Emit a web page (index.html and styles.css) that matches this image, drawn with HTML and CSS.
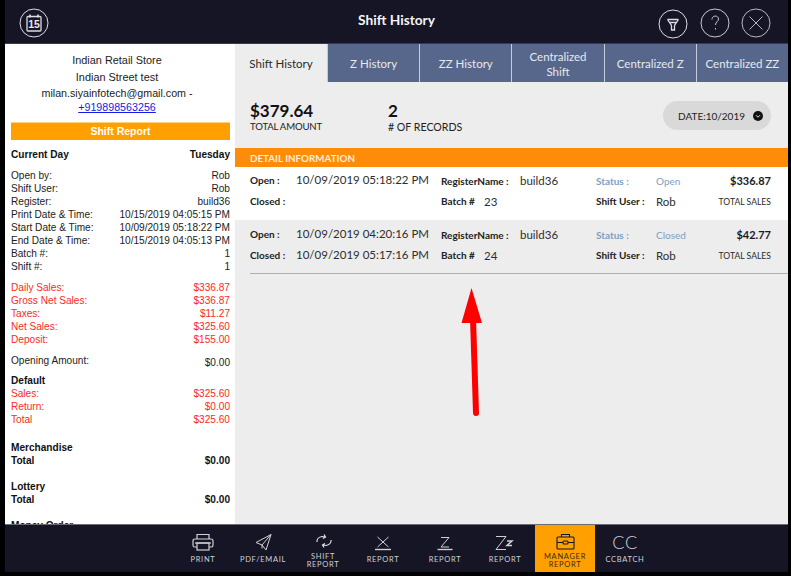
FILE: index.html
```html
<!DOCTYPE html>
<html lang="en">
<head>
<meta charset="utf-8">
<title>Shift History</title>
<link rel="stylesheet" href="styles.css">
</head>
<body>
<div class="app">
  <header class="topbar">
    <svg class="cal" width="30" height="30" viewBox="0 0 30 30" fill="none" stroke="#dcdce2">
      <circle cx="15" cy="15" r="14"/>
      <rect x="8" y="8.5" width="14" height="14.5" rx="1" stroke-width="1.3"/>
      <path d="M11 6.500v3M19 6.500v3" stroke-width="1.6"/>
      <text x="15" y="20" text-anchor="middle" class="cal-num">15</text>
    </svg>
    <h1 class="title">Shift History</h1>
    <div class="top-actions">
      <svg class="drop" width="30" height="30" viewBox="0 0 30 30" fill="none" stroke="#dcdce2">
        <circle cx="15" cy="15" r="14"/>
        <path d="M9.500 10.500h11M9.500 10.500l4 6v4.500h3v-4.500l4-6M11.500 13.500h7" stroke-width="1.3"/>
      </svg>
      <svg width="30" height="30" viewBox="0 0 30 30" fill="none" stroke="#c8c8d0">
        <circle cx="15" cy="15" r="14"/>
        <path d="M12 11.500c0-4.500 6.500-4.500 6.500-.5 0 2.500-3 2.800-3 6M15.500 20v1.500"/>
      </svg>
      <svg width="30" height="30" viewBox="0 0 30 30" fill="none" stroke="#c8c8d0" stroke-width="0.9">
        <circle cx="15" cy="15" r="14"/>
        <path d="M8.500 8.500l13 13M21.500 8.500l-13 13"/>
      </svg>
    </div>
  </header>

  <div class="main">
    <aside class="receipt">
      <p class="store">Indian Retail Store</p>
      <p class="store">Indian Street test</p>
      <p class="contact">milan.siyainfotech@gmail.com - <a href="#">+919898563256</a></p>
      <div class="receipt-title">Shift Report</div>

      <div class="line strong day"><span>Current Day</span><span>Tuesday</span></div>

      <div class="block">
        <div class="line"><span>Open by:</span><span>Rob</span></div>
        <div class="line"><span>Shift User:</span><span>Rob</span></div>
        <div class="line"><span>Register:</span><span>build36</span></div>
        <div class="line"><span>Print Date &amp; Time:</span><span>10/15/2019 04:05:15 PM</span></div>
        <div class="line"><span>Start Date &amp; Time:</span><span>10/09/2019 05:18:22 PM</span></div>
        <div class="line"><span>End Date &amp; Time:</span><span>10/15/2019 04:05:13 PM</span></div>
        <div class="line"><span>Batch #:</span><span>1</span></div>
        <div class="line"><span>Shift #:</span><span>1</span></div>
      </div>

      <div class="block red">
        <div class="line"><span>Daily Sales:</span><span>$336.87</span></div>
        <div class="line"><span>Gross Net Sales:</span><span>$336.87</span></div>
        <div class="line"><span>Taxes:</span><span>$11.27</span></div>
        <div class="line"><span>Net Sales:</span><span>$325.60</span></div>
        <div class="line"><span>Deposit:</span><span>$155.00</span></div>
      </div>

      <div class="block tight">
        <div class="line"><span>Opening Amount:</span><span class="nudge">$0.00</span></div>
      </div>

      <div class="block">
        <div class="line strong"><span>Default</span></div>
        <div class="red">
          <div class="line"><span>Sales:</span><span>$325.60</span></div>
          <div class="line"><span>Return:</span><span>$0.00</span></div>
          <div class="line"><span>Total</span><span>$325.60</span></div>
        </div>
      </div>

      <div class="block wide first">
        <div class="line strong"><span>Merchandise</span></div>
        <div class="line strong"><span>Total</span><span>$0.00</span></div>
      </div>

      <div class="block wide">
        <div class="line strong"><span>Lottery</span></div>
        <div class="line strong"><span>Total</span><span>$0.00</span></div>
      </div>

      <div class="block wide">
        <div class="line strong"><span>Money Order</span></div>
      </div>
    </aside>

    <section class="content">
      <nav class="tabs">
        <div class="tab active">Shift History</div>
        <div class="tab">Z History</div>
        <div class="tab">ZZ History</div>
        <div class="tab">Centralized<br>Shift</div>
        <div class="tab">Centralized Z</div>
        <div class="tab">Centralized ZZ</div>
      </nav>

      <div class="summary">
        <div class="stat">
          <div class="stat-value">$379.64</div>
          <div class="stat-label tight-label">TOTAL AMOUNT</div>
        </div>
        <div class="stat">
          <div class="stat-value">2</div>
          <div class="stat-label"># OF RECORDS</div>
        </div>
        <div class="date-pill">DATE:10/2019
          <svg width="10" height="10" viewBox="0 0 10 10"><circle cx="5" cy="5" r="5" fill="#111"/><path d="M3 4.200l2 2 2-2" fill="none" stroke="#ddd"/></svg>
        </div>
      </div>

      <div class="section-bar">DETAIL INFORMATION</div>

      <div class="record white">
        <b class="k">Open :</b><span class="v date">10/09/2019 05:18:22 PM</span>
        <b class="k low">RegisterName :</b><span class="v">build36</span>
        <span class="k low status">Status :</span><span class="v status-v">Open</span>
        <b class="money">$336.87</b>
        <b class="k">Closed :</b><span class="v date"></span>
        <b class="k">Batch #</b><span class="v batch">23</span>
        <b class="k">Shift User :</b><span class="v">Rob</span>
        <span class="sales">TOTAL SALES</span>
      </div>

      <div class="record last">
        <b class="k">Open :</b><span class="v date">10/09/2019 04:20:16 PM</span>
        <b class="k low">RegisterName :</b><span class="v">build36</span>
        <span class="k low status">Status :</span><span class="v status-v">Closed</span>
        <b class="money">$42.77</b>
        <b class="k">Closed :</b><span class="v date">10/09/2019 05:17:16 PM</span>
        <b class="k">Batch #</b><span class="v batch">24</span>
        <b class="k">Shift User :</b><span class="v">Rob</span>
        <span class="sales">TOTAL SALES</span>
      </div>

      <svg class="arrow" width="30" height="136" viewBox="0 0 30 136">
        <path d="M12 30l3 95" stroke="#fe0000" stroke-width="6" stroke-linecap="round"/>
        <path d="M10.500 0L0.500 35H21z" fill="#fe0000"/>
      </svg>
    </section>
  </div>

  <footer class="toolbar">
    <div class="tool">
      <svg width="22" height="20" viewBox="0 0 22 20" fill="none" stroke="#d0d0d6" stroke-width="1.2"><path d="M5 6V1.500h12V6M5 14H2.500Q1 14 1 12V8q0-2 2-2h16q2 0 2 2v4q0 2-1.500 2H17"/><rect x="5" y="10" width="12" height="7"/><path d="M3 10h16"/></svg>
      <span>PRINT</span>
    </div>
    <div class="tool">
      <svg width="22" height="20" viewBox="0 0 22 20" fill="none" stroke="#d0d0d6" stroke-width="1"><path d="M19 1.500L4 9.500l6 2.500 4 5zM19 1.500L10 12v3.500"/></svg>
      <span>PDF/EMAIL</span>
    </div>
    <div class="tool">
      <svg width="22" height="20" viewBox="0 0 22 20" fill="none" stroke="#e2e2e6" stroke-width="1.2"><path d="M5 9c-.5-3 2-5 5-5.500l3 .5M12 1.500l1.500 2.500-2.500 1.500M19 7c.5 3-2 5-5 5.500l-3-.5M12 14.500L10.500 12 13 10.500"/></svg>
      <span class="two">SHIFT<br>REPORT</span>
    </div>
    <div class="tool">
      <svg width="22" height="20" viewBox="0 0 22 20" fill="none" stroke="#d0d0d6" stroke-width="1"><path d="M5.500 4l11 10M16.500 4l-11 10"/><path d="M3 16.500h16" stroke-width="1.400"/></svg>
      <span>REPORT</span>
    </div>
    <div class="tool z-tool">
      <svg width="22" height="20" viewBox="0 0 22 20" fill="none" stroke="#d0d0d6" stroke-width="1"><path d="M7 4.500h8L7 14h8"/><path d="M3.500 16.500h15" stroke-width="1.400"/></svg>
      <span>REPORT</span>
    </div>
    <div class="tool">
      <svg width="22" height="20" viewBox="0 0 22 20" fill="none" stroke="#d0d0d6" stroke-width="1"><path d="M2 3.500h10L2 16.500h10"/><path d="M13 8h5l-5 4.500h5" stroke-width="1.500"/></svg>
      <span>REPORT</span>
    </div>
    <div class="tool active">
      <svg width="22" height="20" viewBox="0 0 22 20" fill="none" stroke="#17162a" stroke-width="1.100"><rect x="3" y="4" width="17" height="12" rx="1"/><path d="M7.500 4V1.500h8V4M3 9.500h6M14 9.500h6"/><rect x="9" y="8" width="5" height="3" rx="1"/></svg>
      <span class="two">MANAGER<br>REPORT</span>
    </div>
    <div class="tool">
      <div class="cc">CC</div>
      <span>CCBATCH</span>
    </div>
  </footer>
</div>
</body>
</html>
```

FILE: styles.css
```css
* { box-sizing: border-box; }

html, body {
  margin: 0;
  height: 100%;
  overflow: hidden;
  background: #000;
}

.app {
  width: 791px;
  height: 576px;
  padding: 0 3px 4px 5px;
  display: flex;
  flex-direction: column;
  background: #000;
  font-family: "Lato", sans-serif;
}

/* top bar */
.topbar {
  flex: 0 0 44px;
  padding: 8px 17px 0 14px;
  background: #161525;
  border-bottom: 1px solid #3a3a48;
  display: flex;
  align-items: flex-start;
  justify-content: space-between;
  position: relative;
}

.cal-num {
  font-family: "Liberation Sans", sans-serif;
  font-size: 10.500px;
  font-weight: 700;
  fill: #e8e8ec;
  stroke: none;
}

.title {
  position: absolute;
  left: 0;
  right: 0;
  top: 11px;
  margin: 0;
  text-align: center;
  font-size: 13.700px;
  line-height: 17px;
  font-weight: 700;
  color: #f4f4f6;
}

.top-actions {
  display: flex;
  gap: 11.500px;
}

.top-actions svg { display: block; }
.top-actions .drop { margin-top: 1px; }

/* layout */
.main {
  flex: 0 0 480px;
  display: flex;
  min-height: 0;
}

/* left receipt */
.receipt {
  flex: 0 0 230px;
  height: 480px;
  overflow: hidden;
  padding: 10px 5px 0 6px;
  background: #fff;
  font-family: "Liberation Sans", sans-serif;
  font-size: 10.100px;
  line-height: 13px;
  color: #1c1c1c;
}

.store {
  margin: 0 7px 3.500px 0;
  text-align: center;
  font-size: 10.900px;
  line-height: 13px;
}

.contact {
  margin: -1px 7px 0 0;
  text-align: center;
  font-size: 10.700px;
  line-height: 14px;
}

.contact a { color: #1a1ae6; }

.receipt-title {
  height: 18px;
  margin-top: 8px;
  border-top: 1px solid #ffd27a;
  background: #ffa000;
  color: #fff;
  font-weight: 700;
  font-size: 10.500px;
  line-height: 17px;
  text-align: center;
}

.line {
  display: flex;
  justify-content: space-between;
  height: 13px;
}

.strong { font-weight: 700; color: #111; }
.day { margin-top: 8px; margin-bottom: 8px; }
.block { margin-bottom: 8px; }
.block.tight { margin-bottom: 7px; }
.block.wide { margin: 13px 0 0; }
.block.wide.first { margin-top: 15px; }
.red { color: #fb2a1d; }
.nudge { position: relative; top: 2px; }

/* right content */
.content {
  flex: 1;
  min-width: 0;
  position: relative;
  background: #ededed;
}

.tabs {
  display: flex;
  height: 38px;
  background: #57678c;
}

.tab {
  flex: 1 1 0;
  display: flex;
  align-items: center;
  justify-content: center;
  padding: 1px 2px 0;
  border-left: 1px solid #c5ccd9;
  color: #e7e9ef;
  font-size: 11.500px;
  line-height: 15px;
  text-align: center;
}

.tab.active {
  flex: 0 0 92px;
  border-left: 0;
  background: #ededed;
  color: #2a2a2a;
}

.summary {
  height: 66px;
  padding: 19px 17px 0 15px;
  display: flex;
  align-items: flex-start;
}

.stat { width: 138px; }

.stat-value {
  font-size: 17px;
  line-height: 20px;
  font-weight: 700;
  color: #111;
}

.stat-label {
  font-size: 10.600px;
  line-height: 12px;
  color: #222;
}

.tight-label {
  font-size: 9.600px;
  word-spacing: -0.300px;
  letter-spacing: -0.150px;
}

.date-pill {
  margin-left: auto;
  width: 108px;
  height: 29px;
  padding: 0 8px 0 15px;
  display: flex;
  align-items: center;
  justify-content: space-between;
  border-radius: 15px;
  background: #d9d9d9;
  font-size: 10px;
  color: #222;
}

.section-bar {
  height: 19px;
  padding: 1px 0 0 15px;
  background: #ff8c08;
  color: #fbeedd;
  font-size: 9.800px;
  line-height: 19px;
  font-weight: 700;
}

.record {
  height: 53px;
  padding: 2px 17px 0 15px;
  display: grid;
  grid-template-columns: 46px 145px 79px 76px 60px 50px 1fr;
  grid-template-rows: 21px 21px;
  align-items: center;
  font-size: 11.500px;
  color: #2e2e2e;
}

.record.white { background: #fff; }

.record.last {
  height: 54px;
  padding-top: 3px;
  position: relative;
}

.record.last::after {
  content: "";
  position: absolute;
  left: 15px;
  right: 0;
  bottom: 0;
  height: 1px;
  background: #b0b0b0;
}

.k {
  font-size: 10px;
  font-weight: 700;
  color: #222;
  white-space: nowrap;
}

.low { position: relative; top: 1px; }
.v { position: relative; top: 1px; white-space: nowrap; }
.v.date { top: 0; }

.status { font-weight: 700; color: #7d9fc0; }
.status-v { color: #7d9fc0; font-size: 10px; }

.money {
  position: relative;
  top: 1px;
  text-align: right;
  font-size: 11px;
  color: #1a1a1a;
  white-space: nowrap;
}

.sales {
  position: relative;
  top: 1px;
  text-align: right;
  font-size: 8.600px;
  color: #2a2a2a;
  white-space: nowrap;
}

.batch { margin-left: -36px; }

.arrow {
  position: absolute;
  left: 226px;
  top: 244px;
  display: block;
}

/* bottom toolbar */
.toolbar {
  flex: 0 0 48px;
  padding-left: 168px;
  display: flex;
  background: #161525;
  border-top: 1px solid #6b6b74;
}

.tool {
  width: 60px;
  padding-top: 8px;
  display: flex;
  flex-direction: column;
  align-items: center;
  color: #d0d0d6;
  font-size: 7.500px;
  line-height: 8px;
  letter-spacing: 0.700px;
  text-align: center;
}

.z-tool { margin-left: 2px; }

.tool svg { display: block; flex: none; }
.tool span { margin-top: 3px; }
.tool span.two { margin-top: 0; }

.tool.active {
  background: #ffa000;
  color: #3b2a10;
}

.cc {
  height: 20px;
  font-size: 18px;
  line-height: 18px;
  font-weight: 300;
}
```
